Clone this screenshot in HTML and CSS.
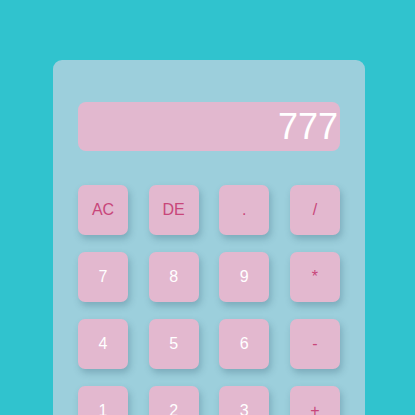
FILE: index.html
```html
<!DOCTYPE html>
<html>
<head>
<meta charset="utf-8">
<link rel="stylesheet" href="styles.css">
</head>
<body>
<div class="calc">
  <div class="display">777</div>
  <div class="keys">
    <div class="key op">AC</div>
    <div class="key op">DE</div>
    <div class="key op">.</div>
    <div class="key op">/</div>
    <div class="key">7</div>
    <div class="key">8</div>
    <div class="key">9</div>
    <div class="key op">*</div>
    <div class="key">4</div>
    <div class="key">5</div>
    <div class="key">6</div>
    <div class="key op">-</div>
    <div class="key">1</div>
    <div class="key">2</div>
    <div class="key">3</div>
    <div class="key op">+</div>
  </div>
</div>
</body>
</html>
```
FILE: styles.css
```css
html, body {
  margin: 0;
  padding: 0;
  height: 100%;
  overflow: hidden;
}
body {
  background: #30c3ce;
  font-family: "Liberation Sans", Arial, sans-serif;
  display: flex;
  justify-content: center;
  padding-top: 60px;
  box-sizing: border-box;
}
.calc {
  width: 312px;
  height: 420px;
  box-sizing: border-box;
  background: #9ccfdc;
  border-radius: 9px;
  padding: 42px 25px 0 25px;
  flex-shrink: 0;
  margin-left: 3px;
}
.display {
  height: 49px;
  background: #e2b8cf;
  border-radius: 8px;
  color: #fff;
  font-size: 36px;
  display: flex;
  align-items: center;
  justify-content: flex-end;
  padding-right: 2px;
}
.keys {
  margin-top: 34px;
  display: grid;
  grid-template-columns: repeat(4, 50px);
  justify-content: space-between;
  row-gap: 17px;
}
.key {
  height: 50px;
  background: #e3b8cf;
  border-radius: 7px;
  box-shadow: 2px 4px 7px rgba(40, 80, 100, 0.28);
  color: #fff;
  font-size: 16px;
  display: flex;
  align-items: center;
  justify-content: center;
}
.key.op {
  color: #c8467a;
}
```
